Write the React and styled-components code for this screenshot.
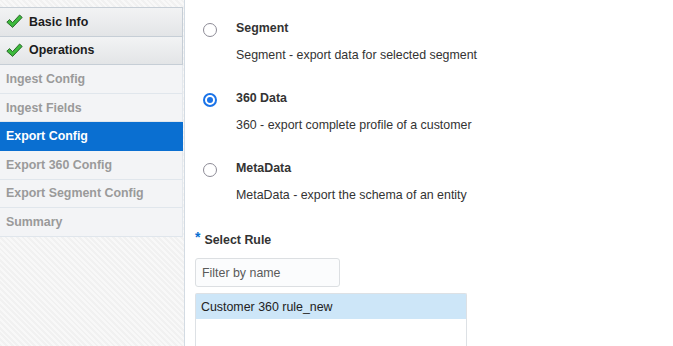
import styled, { createGlobalStyle } from "styled-components";

const Global = createGlobalStyle`
  html, body {
    margin: 0;
    padding: 0;
    background: #ffffff;
    font-family: "Liberation Sans", Arial, sans-serif;
    overflow: hidden;
  }
`;

const Page = styled.div`
  display: flex;
  height: 346px;
  width: 673px;
`;

const Side = styled.nav`
  width: 183px;
  padding: 7px 1px 0 0;
  border-right: 1px solid #d3dbe3;
  display: flex;
  flex-direction: column;
  background: repeating-linear-gradient(
    45deg,
    #f1f1f1 0 2px,
    #f8f8f8 2px 4px
  );
`;

const Step = styled.div`
  height: 27.6px;
  display: flex;
  align-items: center;
  gap: 6px;
  padding-left: 6px;
  font-size: 12.4px;
  font-weight: bold;
  color: ${(p) => (p.done ? "#1c1c1c" : p.active ? "#ffffff" : "#9a9a9a")};
  border-bottom: 1px solid
    ${(p) => (p.done ? "#c6ced6" : p.active ? "#0a6fd1" : "#e0e6ec")};
  border-right: 1px solid
    ${(p) => (p.done ? "#c6ced6" : p.active ? "#0a6fd1" : "#e3e8ed")};
  border-top: ${(p) => (p.first ? "1px solid #c6ced6" : "none")};
  background: ${(p) =>
    p.done
      ? "linear-gradient(#f2f3f4, #e3e5e7)"
      : p.active
      ? "#0a6fd1"
      : "#f3f4f6"};
`;

const Main = styled.main`
  flex: 1;
  padding-left: 10px;
  display: flex;
  flex-direction: column;
`;

const Options = styled.div`
  padding: 20px 0 0 8px;
  display: flex;
  flex-direction: column;
  gap: 27px;
`;

const Option = styled.label`
  display: flex;
  gap: 19px;
`;

const Radio = styled.span`
  flex: none;
  width: 14px;
  height: 14px;
  margin-top: 3px;
  box-sizing: border-box;
  border-radius: 50%;
  border: ${(p) => (p.checked ? "2px solid #1a73e8" : "1.6px solid #8d8b96")};
  display: flex;
  align-items: center;
  justify-content: center;
  &::after {
    content: "";
    width: 6px;
    height: 6px;
    border-radius: 50%;
    background: ${(p) => (p.checked ? "#1a73e8" : "transparent")};
  }
`;

const OptText = styled.div`
  display: flex;
  flex-direction: column;
  gap: 11px;
`;

const OptTitle = styled.div`
  font-size: 12.4px;
  line-height: 16px;
  font-weight: bold;
  color: #333333;
`;

const OptDesc = styled.div`
  font-size: 12.4px;
  line-height: 16px;
  color: #333333;
`;

const FieldLabel = styled.div`
  margin-top: 29px;
  font-size: 12.4px;
  line-height: 16px;
  font-weight: bold;
  color: #333333;
  display: flex;
  gap: 4px;
`;

const Req = styled.span`
  color: #0a6fd1;
  font-size: 14px;
  line-height: 10px;
`;

const Filter = styled.input`
  margin-top: 10px;
  width: 145px;
  height: 29px;
  box-sizing: border-box;
  border: 1px solid #dcdfe2;
  border-radius: 3px;
  background: #fbfcfd;
  padding: 0 6px;
  font-family: "Liberation Sans", Arial, sans-serif;
  font-size: 12.4px;
  color: #333;
  outline: none;
  &::placeholder {
    color: #5a5a5a;
  }
`;

const List = styled.ul`
  margin: 6px 0 0;
  padding: 0;
  list-style: none;
  width: 272px;
  flex: 1;
  box-sizing: border-box;
  border: 1px solid #dde1e5;
  border-bottom: none;
  border-radius: 2px 2px 0 0;
`;

const ListItem = styled.li`
  height: 25px;
  display: flex;
  align-items: center;
  padding-left: 5px;
  font-size: 12.4px;
  color: #222;
  background: ${(p) => (p.selected ? "#cde6f8" : "transparent")};
`;

function Check() {
  return (
    <svg width="17" height="15" viewBox="0 0 17 15">
      <path
        d="M0.8 8.2 L3.5 5.6 L6.6 8.6 L13.6 1.0 L16.2 3.4 L6.6 13.4 Z"
        fill="#3dbb3d"
        stroke="#2f6a2f"
        strokeWidth="1"
        strokeLinejoin="round"
      />
    </svg>
  );
}

const steps = [
  { name: "Basic Info", done: true },
  { name: "Operations", done: true },
  { name: "Ingest Config" },
  { name: "Ingest Fields" },
  { name: "Export Config", active: true },
  { name: "Export 360 Config" },
  { name: "Export Segment Config" },
  { name: "Summary" },
];

const options = [
  { title: "Segment", desc: "Segment - export data for selected segment" },
  { title: "360 Data", desc: "360 - export complete profile of a customer", checked: true },
  { title: "MetaData", desc: "MetaData - export the schema of an entity" },
];

export default function App() {
  return (
    <>
      <Global />
      <Page>
        <Side>
          {steps.map((s, i) => (
            <Step key={s.name} done={s.done} active={s.active} first={i === 0}>
              {s.done && <Check />}
              {s.name}
            </Step>
          ))}
        </Side>
        <Main>
          <Options>
            {options.map((o) => (
              <Option key={o.title}>
                <Radio checked={o.checked} />
                <OptText>
                  <OptTitle>{o.title}</OptTitle>
                  <OptDesc>{o.desc}</OptDesc>
                </OptText>
              </Option>
            ))}
          </Options>
          <FieldLabel>
            <Req>*</Req>
            Select Rule
          </FieldLabel>
          <Filter placeholder="Filter by name" />
          <List>
            <ListItem selected>Customer 360 rule_new</ListItem>
          </List>
        </Main>
      </Page>
    </>
  );
}
